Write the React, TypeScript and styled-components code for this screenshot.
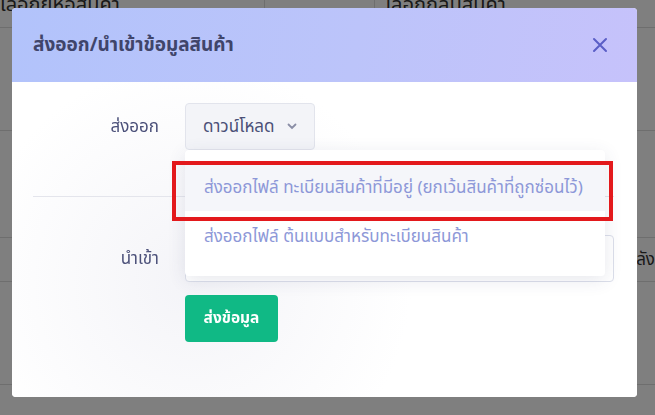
import React from 'react';
import styled, { createGlobalStyle } from 'styled-components';

const GlobalStyle = createGlobalStyle`
  html, body {
    margin: 0;
    padding: 0;
    width: 655px;
    height: 415px;
    overflow: hidden;
    background: #ffffff;
    font-family: 'Noto Sans Thai', 'Noto Sans', 'Liberation Sans', sans-serif;
  }
  * {
    box-sizing: border-box;
  }
`;

// page behind the modal
const Page = styled.div`
  width: 655px;
  height: 415px;
  background: #ffffff;
  color: #333333;
`;

const FilterBar = styled.div`
  display: grid;
  grid-template-columns: 265px 20px 90px 1fr;
  height: 38px;
  margin-top: -10px;
  border-bottom: 1px solid #dddddd;
  font-size: 20px;
  line-height: 30px;
  align-items: end;
  > span {
    overflow: hidden;
    white-space: nowrap;
    height: 100%;
  }
`;

const FilterCell = styled.span<{ $bordered?: boolean }>`
  border-right: ${(p) => (p.$bordered ? '1px solid #dddddd' : 'none')};
`;

const TableRow = styled.div<{ $h: number }>`
  height: ${(p) => p.$h}px;
  border-bottom: 1px solid #dddddd;
  display: flex;
  justify-content: flex-end;
  align-items: center;
  font-size: 17px;
`;

const Overlay = styled.div`
  position: fixed;
  inset: 0;
  background: rgba(0, 0, 0, 0.5);
`;

const Modal = styled.div`
  position: fixed;
  left: 12px;
  top: 8px;
  width: 625px;
  height: 389px;
  background: #ffffff;
  border-radius: 4px;
  overflow: visible;
  display: flex;
  flex-direction: column;
`;

const Header = styled.div`
  height: 74px;
  flex-shrink: 0;
  display: flex;
  align-items: center;
  justify-content: space-between;
  padding: 0 28px 0 21px;
  border-radius: 4px 4px 0 0;
  background: linear-gradient(100deg, #b2c3fb 0%, #bcc4fa 55%, #c6c2fb 100%);
`;

const Title = styled.h2`
  margin: 0;
  font-size: 19px;
  font-weight: 700;
  color: #40456a;
`;

const CloseButton = styled.button`
  border: none;
  background: transparent;
  padding: 0;
  width: 18px;
  height: 18px;
  display: flex;
  align-items: center;
  justify-content: center;
  cursor: pointer;
`;

const Body = styled.div`
  flex: 1;
  padding: 21px 23px 0 21px;
  display: flex;
  flex-direction: column;
  background: radial-gradient(circle at 180px 200px, #f4f4f8 0%, #ffffff 45%);
  border-radius: 0 0 4px 4px;
`;

const FormRow = styled.div`
  display: grid;
  grid-template-columns: 152px 1fr;
  align-items: start;
`;

const Label = styled.div<{ $top: number }>`
  text-align: right;
  padding-right: 26px;
  padding-top: ${(p) => p.$top}px;
  font-size: 17px;
  color: #4c517a;
`;

const Field = styled.div`
  position: relative;
  display: flex;
  flex-direction: column;
  align-items: flex-start;
  gap: 13px;
`;

const DownloadButton = styled.button`
  height: 47px;
  padding: 0 17px 0 17px;
  display: flex;
  align-items: center;
  gap: 12px;
  background: #f3f4f8;
  border: 1px solid #e2e4ec;
  border-radius: 4px;
  font-family: inherit;
  font-size: 17px;
  color: #4b5077;
  cursor: pointer;
`;

const Divider = styled.hr`
  border: none;
  border-top: 1px solid #e4e5ec;
  margin: 46px 0 38px;
  width: 100%;
`;

const FileInput = styled.div`
  width: 429px;
  height: 47px;
  border: 1px solid #dcdfea;
  border-radius: 4px;
  background: #ffffff;
  padding: 0 0 6px 17px;
  display: flex;
  align-items: flex-end;
`;

const FileChooser = styled.div`
  width: 78px;
  height: 30px;
  border-bottom: 1px solid #b8b8be;
`;

const SubmitButton = styled.button`
  height: 47px;
  width: 93px;
  border: none;
  border-radius: 4px;
  background: #10b985;
  color: #ffffff;
  font-family: inherit;
  font-size: 15.5px;
  font-weight: 700;
  cursor: pointer;
`;

const Menu = styled.div`
  position: absolute;
  left: 0;
  top: 47px;
  width: 420px;
  padding: 12px 0 12px;
  background: #ffffff;
  border-radius: 4px;
  box-shadow: 0 4px 18px rgba(60, 64, 110, 0.12);
  z-index: 2;
`;

const MenuItem = styled.div<{ $active?: boolean }>`
  height: ${(p) => (p.$active ? 49 : 53)}px;
  display: flex;
  align-items: ${(p) => (p.$active ? 'center' : 'flex-start')};
  padding: ${(p) => (p.$active ? '3px 19px 0' : '13px 19px 0')};
  font-size: 17px;
  color: #8d98d8;
  background: ${(p) => (p.$active ? '#f5f6fa' : '#ffffff')};
  white-space: nowrap;
`;

const Highlight = styled.div`
  position: absolute;
  left: -13px;
  top: 11px;
  width: 441px;
  height: 60px;
  border: 4px solid #e3191c;
  pointer-events: none;
`;

export default function App() {
  return (
    <>
      <GlobalStyle />
      <Page>
        <FilterBar>
          <FilterCell $bordered>เลือกยี่ห้อสินค้า</FilterCell>
          <FilterCell />
          <FilterCell $bordered />
          <FilterCell>&nbsp;&nbsp;เลือกกลุ่มสินค้า</FilterCell>
        </FilterBar>
        <TableRow $h={103} />
        <TableRow $h={107} />
        <TableRow $h={44}>คลัง</TableRow>
        <TableRow $h={103} />
      </Page>
      <Overlay />
      <Modal>
        <Header>
          <Title>ส่งออก/นำเข้าข้อมูลสินค้า</Title>
          <CloseButton aria-label="close">
            <svg width="16" height="16" viewBox="0 0 16 16">
              <path d="M2 2 L14 14 M14 2 L2 14" stroke="#5a5ec6" strokeWidth="2" strokeLinecap="round" />
            </svg>
          </CloseButton>
        </Header>
        <Body>
          <FormRow>
            <Label $top={11}>ส่งออก</Label>
            <Field>
              <DownloadButton>
                ดาวน์โหลด
                <svg width="10" height="7" viewBox="0 0 10 7">
                  <path d="M1.5 1.5 L5 5 L8.5 1.5" stroke="#8a8ea6" strokeWidth="1.8" fill="none" strokeLinecap="round" />
                </svg>
              </DownloadButton>
              <Menu>
                <Highlight />
                <MenuItem $active>ส่งออกไฟล์ ทะเบียนสินค้าที่มีอยู่ (ยกเว้นสินค้าที่ถูกซ่อนไว้)</MenuItem>
                <MenuItem>ส่งออกไฟล์ ต้นแบบสำหรับทะเบียนสินค้า</MenuItem>
              </Menu>
            </Field>
          </FormRow>
          <Divider />
          <FormRow>
            <Label $top={11}>นำเข้า</Label>
            <Field>
              <FileInput>
                <FileChooser />
              </FileInput>
              <SubmitButton>ส่งข้อมูล</SubmitButton>
            </Field>
          </FormRow>
        </Body>
      </Modal>
    </>
  );
}
